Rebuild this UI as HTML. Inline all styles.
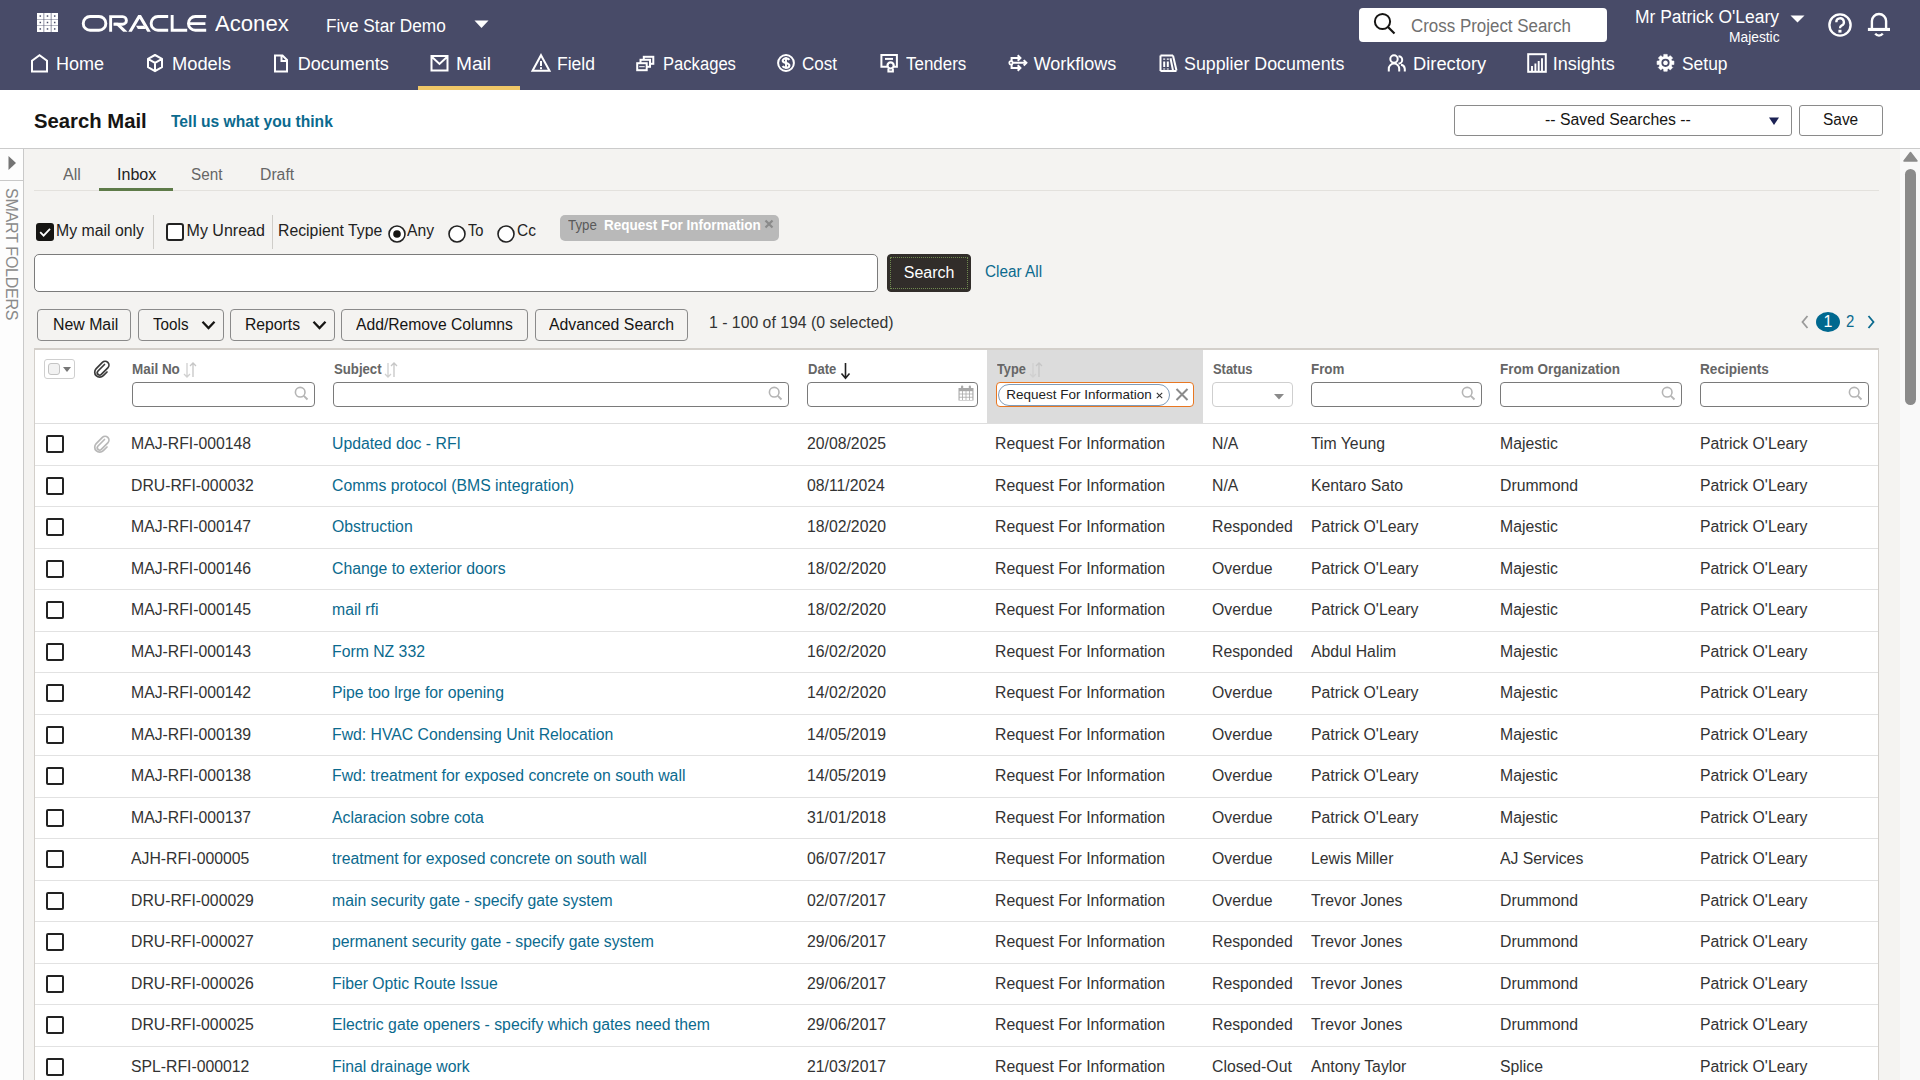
<!DOCTYPE html>
<html><head><meta charset="utf-8"><title>Search Mail</title>
<style>
html,body{margin:0;padding:0;width:1920px;height:1080px;overflow:hidden;background:#f4f3f1;}
body{position:relative;font-family:"Liberation Sans",sans-serif;}
.t{position:absolute;white-space:nowrap;transform-origin:0 0;}
svg{overflow:visible}
</style></head><body>
<div style="position:absolute;left:0px;top:0px;width:1920px;height:90px;background:#484b68"></div>
<svg style="position:absolute;left:37px;top:13px;" width="21" height="19" viewBox="0 0 21 19"><rect x="0.00" y="0.00" width="6.6" height="6.1" fill="#fff"/><rect x="2.55" y="2.30" width="1.5" height="1.5" fill="#484b68"/><rect x="7.20" y="0.00" width="6.6" height="6.1" fill="#fff"/><rect x="9.75" y="2.30" width="1.5" height="1.5" fill="#484b68"/><rect x="14.40" y="0.00" width="6.6" height="6.1" fill="#fff"/><rect x="16.95" y="2.30" width="1.5" height="1.5" fill="#484b68"/><rect x="0.00" y="6.45" width="6.6" height="6.1" fill="#fff"/><rect x="2.55" y="8.75" width="1.5" height="1.5" fill="#484b68"/><rect x="7.20" y="6.45" width="6.6" height="6.1" fill="#fff"/><rect x="9.75" y="8.75" width="1.5" height="1.5" fill="#484b68"/><rect x="14.40" y="6.45" width="6.6" height="6.1" fill="#fff"/><rect x="16.95" y="8.75" width="1.5" height="1.5" fill="#484b68"/><rect x="0.00" y="12.90" width="6.6" height="6.1" fill="#fff"/><rect x="2.55" y="15.20" width="1.5" height="1.5" fill="#484b68"/><rect x="7.20" y="12.90" width="6.6" height="6.1" fill="#fff"/><rect x="9.75" y="15.20" width="1.5" height="1.5" fill="#484b68"/><rect x="14.40" y="12.90" width="6.6" height="6.1" fill="#fff"/><rect x="16.95" y="15.20" width="1.5" height="1.5" fill="#484b68"/></svg>
<svg style="position:absolute;left:78px;top:12px;" width="132" height="22" viewBox="78 12 132 22"><g fill="none" stroke="#fff" stroke-width="2.9">
<path d="M90.1 16.55 H99 A6.85 6.85 0 0 1 99 30.25 H90.1 A6.85 6.85 0 0 1 90.1 16.55 Z"/>
<path d="M110.65 31.7 V16.6 H122.6 A3.8 3.8 0 0 1 122.6 24.2 H113.5"/>
<path d="M158 16.55 H168.2 M158 30.25 H168.2 M158 16.55 A6.85 6.85 0 0 0 158 30.25"/>
<path d="M172.15 15.1 V30.25 H187.2"/>
<path d="M195.3 16.55 H206.2 M195.3 30.25 H206.2 M195.3 16.55 A6.85 6.85 0 0 0 195.3 30.25 M189.5 23.65 H205.4"/>
</g>
<g fill="#fff">
<path d="M114 22.8 H118.2 L127.6 31.7 H123.2 Z"/>
<path d="M128.3 31.7 L138.2 15.1 H141 L150.8 31.7 H147.3 L139.6 18.8 L131.8 31.7 Z"/>
<path d="M136 25.8 H144 L146 29 H137.9 Z"/>
</g></svg>
<span id="t1" class="t" style="left:215.00px;top:12.88px;font-size:22px;line-height:22px;color:#ffffff;transform:scaleX(1.0050);">Aconex</span>
<span id="t2" class="t" style="left:325.60px;top:16.76px;font-size:18px;line-height:18px;color:#ffffff;transform:scaleX(0.9579);">Five Star Demo</span>
<svg style="position:absolute;left:474px;top:20px;" width="15" height="8" viewBox="0 0 15 8"><path d="M0.5 0.5 H14.5 L7.5 8 Z" fill="#fff"/></svg>
<div style="position:absolute;left:1359px;top:8px;width:248px;height:33.5px;background:#fff;border-radius:4px"></div>
<svg style="position:absolute;left:1373px;top:12px;" width="24" height="23" viewBox="0 0 24 23"><circle cx="9.5" cy="9.5" r="7.6" fill="none" stroke="#161513" stroke-width="2"/><path d="M15 15 L21.5 21.5" stroke="#161513" stroke-width="2.2"/></svg>
<span id="t3" class="t" style="left:1410.50px;top:16.76px;font-size:18px;line-height:18px;color:#6f6f6f;transform:scaleX(0.9400);">Cross Project Search</span>
<span id="t4" class="t" style="left:1635.00px;top:7.76px;font-size:18px;line-height:18px;color:#ffffff;transform:scaleX(0.9697);">Mr Patrick O'Leary</span>
<span id="t5" class="t" style="left:1729.00px;top:30.35px;font-size:14px;line-height:14px;color:#ffffff;transform:scaleX(0.9852);">Majestic</span>
<svg style="position:absolute;left:1790px;top:14.5px;" width="15" height="8" viewBox="0 0 15 8"><path d="M0.5 0.5 H14.5 L7.5 7.5 Z" fill="#fff"/></svg>
<svg style="position:absolute;left:1827px;top:12px;" width="26" height="26" viewBox="0 0 26 26"><circle cx="13" cy="13" r="10.6" fill="none" stroke="#fff" stroke-width="2.4"/><path d="M9.3 10.2 A3.8 3.8 0 1 1 14.5 13.6 C13.3 14.2 13 14.8 13 16.2" fill="none" stroke="#fff" stroke-width="2.3"/><rect x="11.4" y="17.8" width="3.1" height="2.8" fill="#fff"/></svg>
<svg style="position:absolute;left:1866px;top:12px;" width="26" height="26" viewBox="0 0 26 26"><path d="M5.9 16.5 V9.1 A7.1 7.1 0 0 1 20.1 9.1 V16.5" fill="none" stroke="#fff" stroke-width="2.4"/><rect x="1.9" y="15.9" width="22.1" height="3.1" fill="#fff"/><path d="M9.2 21.6 A4.7 4.7 0 0 0 16.8 21.6" fill="none" stroke="#fff" stroke-width="2.3"/></svg>
<span id="t6" class="t" style="left:56.00px;top:54.76px;font-size:18px;line-height:18px;color:#ffffff;">Home</span>
<span id="t7" class="t" style="left:171.60px;top:54.76px;font-size:18px;line-height:18px;color:#ffffff;transform:scaleX(1.0171);">Models</span>
<span id="t8" class="t" style="left:297.70px;top:54.76px;font-size:18px;line-height:18px;color:#ffffff;">Documents</span>
<span id="t9" class="t" style="left:455.60px;top:54.76px;font-size:18px;line-height:18px;color:#ffffff;transform:scaleX(1.0644);">Mail</span>
<span id="t10" class="t" style="left:557.30px;top:54.76px;font-size:18px;line-height:18px;color:#ffffff;transform:scaleX(0.9729);">Field</span>
<span id="t11" class="t" style="left:662.50px;top:54.76px;font-size:18px;line-height:18px;color:#ffffff;transform:scaleX(0.9225);">Packages</span>
<span id="t12" class="t" style="left:802.00px;top:54.76px;font-size:18px;line-height:18px;color:#ffffff;transform:scaleX(0.9457);">Cost</span>
<span id="t13" class="t" style="left:905.50px;top:54.76px;font-size:18px;line-height:18px;color:#ffffff;transform:scaleX(0.9416);">Tenders</span>
<span id="t14" class="t" style="left:1033.70px;top:54.76px;font-size:18px;line-height:18px;color:#ffffff;">Workflows</span>
<span id="t15" class="t" style="left:1184.40px;top:54.76px;font-size:18px;line-height:18px;color:#ffffff;transform:scaleX(0.9896);">Supplier Documents</span>
<span id="t16" class="t" style="left:1412.80px;top:54.76px;font-size:18px;line-height:18px;color:#ffffff;transform:scaleX(1.0168);">Directory</span>
<span id="t17" class="t" style="left:1552.80px;top:54.76px;font-size:18px;line-height:18px;color:#ffffff;">Insights</span>
<span id="t18" class="t" style="left:1681.70px;top:54.76px;font-size:18px;line-height:18px;color:#ffffff;transform:scaleX(0.9675);">Setup</span>
<div style="position:absolute;left:418px;top:86px;width:102px;height:4px;background:#f0c767"></div>
<svg style="position:absolute;left:30px;top:53px;" width="19" height="20" viewBox="0 0 19 20"><path d="M2 18.5 V7.8 L9.5 2.2 L17 7.8 V18.5 Z" fill="none" stroke="#fff" stroke-width="2" stroke-linejoin="miter"/></svg>
<svg style="position:absolute;left:146px;top:53px;" width="18" height="20" viewBox="0 0 18 20"><path d="M9 2 L16 5.8 V14.2 L9 18.2 L2 14.2 V5.8 Z M2 5.8 L9 9.8 L16 5.8 M9 9.8 V18.2" fill="none" stroke="#fff" stroke-width="2" stroke-linejoin="round"/></svg>
<svg style="position:absolute;left:273px;top:53px;" width="16" height="20" viewBox="0 0 16 20"><path d="M2 2.5 H9.5 L14 7 V18.5 H2 Z M8.5 2.5 V8 H14" fill="none" stroke="#fff" stroke-width="2"/></svg>
<svg style="position:absolute;left:430px;top:54px;" width="19" height="18" viewBox="0 0 19 18"><path d="M1.5 2 H17.5 V16.5 H1.5 Z M1.5 2.5 L9.5 10 L17.5 2.5" fill="none" stroke="#fff" stroke-width="2"/></svg>
<svg style="position:absolute;left:531px;top:53px;" width="20" height="20" viewBox="0 0 20 20"><path d="M10 2.2 L18.5 17.8 H1.5 Z" fill="none" stroke="#fff" stroke-width="2" stroke-linejoin="miter"/><path d="M10 8 V13" stroke="#fff" stroke-width="2"/><rect x="9" y="14.2" width="2" height="2" fill="#fff"/></svg>
<svg style="position:absolute;left:636px;top:55px;" width="19" height="17" viewBox="0 0 19 17"><rect x="7.8" y="1.8" width="9.5" height="7" fill="none" stroke="#fff" stroke-width="2"/><rect x="4.5" y="4.8" width="9.5" height="7" fill="#484b68" stroke="#fff" stroke-width="2"/><rect x="1.2" y="8.2" width="9.5" height="7" fill="#484b68" stroke="#fff" stroke-width="2"/><path d="M3.2 11.7 H8.7" stroke="#fff" stroke-width="1"/></svg>
<svg style="position:absolute;left:776px;top:53px;" width="20" height="20" viewBox="0 0 20 20"><circle cx="10" cy="10" r="7.9" fill="none" stroke="#fff" stroke-width="2"/><path d="M13.4 6.9 C12.8 6 11.7 5.4 10 5.4 C8.1 5.4 6.7 6.3 6.7 7.8 C6.7 10.6 13.4 9.5 13.4 12.4 C13.4 13.9 12 14.7 10 14.7 C8.4 14.7 7.2 14.1 6.5 13.1" fill="none" stroke="#fff" stroke-width="2.1"/><path d="M10 4.3 V15.7" stroke="#fff" stroke-width="1.9"/></svg>
<svg style="position:absolute;left:879px;top:53px;" width="20" height="20" viewBox="0 0 20 20"><path d="M8.2 13.7 H2.4 V2.1 H17.9 V13.7 H15" fill="none" stroke="#fff" stroke-width="2"/><path d="M6 5.9 H14" stroke="#fff" stroke-width="2"/><circle cx="11.6" cy="12.4" r="3.1" fill="none" stroke="#fff" stroke-width="2.2"/><path d="M9.4 15.6 V18.4 H13.9 V15.6" fill="none" stroke="#fff" stroke-width="2"/></svg>
<svg style="position:absolute;left:1008px;top:53px;" width="20" height="20" viewBox="0 0 20 20"><path d="M3.6 5 H11.6 M3.6 15 H11.6 M3.6 4 V16 M4.6 9.8 H17.6" fill="none" stroke="#fff" stroke-width="2"/><path d="M9.7 2.3 L12.4 5 L9.7 7.7 M9.7 12.3 L12.4 15 L9.7 17.7 M15.7 7.1 L18.4 9.8 L15.7 12.5" fill="none" stroke="#fff" stroke-width="2"/><circle cx="3" cy="9.8" r="1.7" fill="#484b68" stroke="#fff" stroke-width="1.7"/></svg>
<svg style="position:absolute;left:1159px;top:53px;" width="19" height="20" viewBox="0 0 19 20"><path d="M1.5 2.5 H14 M1.5 18 H17.5 M1.5 2.5 V18 M5.2 5.5 V6.8 M8.8 5.5 V6.8 M5.2 8.5 V14 M8.8 8.5 V14 M5.2 15.5 V16.5 M8.8 15.5 V16.5 M11.5 5.2 L14 17.5 M14 2.5 L17.5 17.5" fill="none" stroke="#fff" stroke-width="2"/></svg>
<svg style="position:absolute;left:1387px;top:53px;" width="20" height="20" viewBox="0 0 20 20"><circle cx="7" cy="6" r="3.7" fill="none" stroke="#fff" stroke-width="2"/><path d="M11.5 3.2 A3.7 3.7 0 1 1 11.5 10.6" fill="none" stroke="#fff" stroke-width="2"/><path d="M1.8 18.5 V15.8 A5.2 5.2 0 0 1 12.2 15.8 V18.5 M14 11.8 A4.5 4.5 0 0 1 17.8 15.8 V18.5" fill="none" stroke="#fff" stroke-width="2"/></svg>
<svg style="position:absolute;left:1527px;top:53px;" width="20" height="20" viewBox="0 0 20 20"><rect x="1.2" y="1.2" width="17.6" height="17.6" fill="none" stroke="#fff" stroke-width="2"/><path d="M5 18 V13 M8.4 18 V10.5 M11.7 18 V8 M15 18 V5.2" stroke="#fff" stroke-width="1.9"/></svg>
<svg style="position:absolute;left:1656px;top:53px;" width="20" height="20" viewBox="0 0 20 20"><g transform="translate(9.5,9.8)"><path d="M-1.76 -6.36 L-1.75 -8.42 L1.75 -8.42 L1.76 -6.36 L3.25 -5.74 L4.72 -7.19 L7.19 -4.72 L5.74 -3.25 L6.36 -1.76 L8.42 -1.75 L8.42 1.75 L6.36 1.76 L5.74 3.25 L7.19 4.72 L4.72 7.19 L3.25 5.74 L1.76 6.36 L1.75 8.42 L-1.75 8.42 L-1.76 6.36 L-3.25 5.74 L-4.72 7.19 L-7.19 4.72 L-5.74 3.25 L-6.36 1.76 L-8.42 1.75 L-8.42 -1.75 L-6.36 -1.76 L-5.74 -3.25 L-7.19 -4.72 L-4.72 -7.19 L-3.25 -5.74 Z" fill="#fff" stroke="#fff" stroke-width="0.6" stroke-linejoin="round"/><circle r="3.2" fill="#fff" stroke="#484b68" stroke-width="1.8"/></g></svg>
<div style="position:absolute;left:0px;top:90px;width:1920px;height:58px;background:#fff"></div>
<div style="position:absolute;left:0px;top:148px;width:1920px;height:1px;background:#cbcbcb"></div>
<span id="t19" class="t" style="left:33.70px;top:110.67px;font-size:20px;line-height:20px;color:#161513;font-weight:700;transform:scaleX(1.0135);">Search Mail</span>
<span id="t20" class="t" style="left:171.30px;top:114.46px;font-size:16px;line-height:16px;color:#0b6a8e;font-weight:700;transform:scaleX(0.9751);">Tell us what you think</span>
<div style="position:absolute;left:1454px;top:105px;width:336px;height:29px;background:#fff;border:1px solid #8a8a8a;border-radius:3px"></div>
<span id="t21" class="t" style="left:1545.00px;top:112.26px;font-size:16px;line-height:16px;color:#161513;transform:scaleX(0.9879);">-- Saved Searches --</span>
<svg style="position:absolute;left:1769px;top:117px;" width="10" height="8" viewBox="0 0 10 8"><path d="M0 0.5 H10 L5 8 Z" fill="#1c2255"/></svg>
<div style="position:absolute;left:1799px;top:105px;width:82px;height:29px;background:#fff;border:1px solid #8a8a8a;border-radius:3px"></div>
<span id="t22" class="t" style="left:1823.00px;top:112.26px;font-size:16px;line-height:16px;color:#161513;transform:scaleX(0.9653);">Save</span>
<div style="position:absolute;left:0px;top:149px;width:23px;height:931px;background:#fdfdfd"></div>
<div style="position:absolute;left:23px;top:149px;width:1px;height:931px;background:#c9c9c9"></div>
<div style="position:absolute;left:0px;top:180px;width:23px;height:1px;background:#c9c9c9"></div>
<svg style="position:absolute;left:8px;top:156px;" width="9" height="14" viewBox="0 0 9 14"><path d="M0.5 0 L8 7 L0.5 14 Z" fill="#747474"/></svg>
<span class="t" style="left:3px;top:188px;font-size:16px;line-height:16px;color:#8a8a8a;writing-mode:vertical-rl;letter-spacing:-0.25px">SMART FOLDERS</span>
<div style="position:absolute;left:24px;top:149px;width:1876px;height:931px;background:#f4f3f1"></div>
<div style="position:absolute;left:1900px;top:149px;width:20px;height:931px;background:#f9f9f9"></div>
<svg style="position:absolute;left:1903px;top:151px;" width="15" height="11" viewBox="0 0 15 11"><path d="M1 10 L7.5 1.5 L14 10 Z" fill="#8b8b8b" stroke="#8b8b8b" stroke-linejoin="round" stroke-width="1.5"/></svg>
<div style="position:absolute;left:1905px;top:168.5px;width:11px;height:236px;background:#8b8b8b;border-radius:6px"></div>
<div style="position:absolute;left:34px;top:190px;width:1845px;height:1px;background:#e3e1dd"></div>
<span id="t23" class="t" style="left:62.90px;top:166.76px;font-size:16px;line-height:16px;color:#666;transform:scaleX(1.0043);">All</span>
<span id="t24" class="t" style="left:116.70px;top:166.76px;font-size:16px;line-height:16px;color:#222;transform:scaleX(1.0042);">Inbox</span>
<span id="t25" class="t" style="left:191.40px;top:166.76px;font-size:16px;line-height:16px;color:#666;transform:scaleX(0.9531);">Sent</span>
<span id="t26" class="t" style="left:259.80px;top:166.76px;font-size:16px;line-height:16px;color:#666;transform:scaleX(0.9846);">Draft</span>
<div style="position:absolute;left:99px;top:188px;width:74px;height:3px;background:#5e7b49"></div>
<div style="position:absolute;left:36px;top:223px;width:18px;height:18px;background:#161513;border-radius:3px"></div>
<svg style="position:absolute;left:36px;top:223px;" width="18" height="18" viewBox="0 0 18 18"><path d="M4.2 9.2 L7.6 12.6 L14 5.8" fill="none" stroke="#fff" stroke-width="1.8"/></svg>
<span id="t27" class="t" style="left:56.40px;top:223.06px;font-size:16px;line-height:16px;color:#222;transform:scaleX(0.9897);">My mail only</span>
<div style="position:absolute;left:153px;top:215px;width:1px;height:34px;background:#cfcdc9"></div>
<div style="position:absolute;left:166px;top:223px;width:18px;height:18px;box-sizing:border-box;border:2px solid #222;border-radius:3px;background:#fff"></div>
<span id="t28" class="t" style="left:186.60px;top:223.06px;font-size:16px;line-height:16px;color:#222;">My Unread</span>
<div style="position:absolute;left:272px;top:215px;width:1px;height:34px;background:#cfcdc9"></div>
<span id="t29" class="t" style="left:278.00px;top:223.06px;font-size:16px;line-height:16px;color:#222;transform:scaleX(0.9873);">Recipient Type</span>
<svg style="position:absolute;left:387px;top:224px;" width="20" height="20" viewBox="0 0 20 20"><circle cx="10" cy="10" r="8" fill="#fff" stroke="#222" stroke-width="1.6"/><circle cx="10" cy="10" r="3.8" fill="#161513"/></svg>
<span id="t30" class="t" style="left:407.00px;top:223.06px;font-size:16px;line-height:16px;color:#222;transform:scaleX(0.9793);">Any</span>
<svg style="position:absolute;left:447px;top:224px;" width="20" height="20" viewBox="0 0 20 20"><circle cx="10" cy="10" r="8" fill="#fff" stroke="#222" stroke-width="1.6"/></svg>
<span id="t31" class="t" style="left:467.60px;top:223.06px;font-size:16px;line-height:16px;color:#222;transform:scaleX(0.9176);">To</span>
<svg style="position:absolute;left:496px;top:224px;" width="20" height="20" viewBox="0 0 20 20"><circle cx="10" cy="10" r="8" fill="#fff" stroke="#222" stroke-width="1.6"/></svg>
<span id="t32" class="t" style="left:516.50px;top:223.06px;font-size:16px;line-height:16px;color:#222;transform:scaleX(0.9665);">Cc</span>
<div style="position:absolute;left:560px;top:215px;width:219px;height:26px;background:#b9b9b9;border-radius:5px"></div>
<span id="t33" class="t" style="left:568.00px;top:217.50px;font-size:14px;line-height:14px;color:#5a5a5a;transform:scaleX(0.9488);">Type</span>
<span id="t34" class="t" style="left:603.75px;top:217.50px;font-size:14px;line-height:14px;color:#fff;font-weight:700;transform:scaleX(0.9645);">Request For Information</span>
<svg style="position:absolute;left:764px;top:219px;" width="10" height="10" viewBox="0 0 10 10"><path d="M1.5 1.5 L8.5 8.5 M8.5 1.5 L1.5 8.5" stroke="#8a8a8a" stroke-width="2.2"/></svg>
<div style="position:absolute;left:34px;top:254px;width:844px;height:38px;box-sizing:border-box;background:#fff;border:1px solid #7b7b7b;border-radius:5px"></div>
<div style="position:absolute;left:887px;top:254px;width:84px;height:38px;background:#312d2a;border-radius:4px;box-sizing:border-box;border:1px solid #312d2a"></div>
<div style="position:absolute;left:890px;top:257px;width:78px;height:32px;box-sizing:border-box;border:1px dotted #6f8a4f"></div>
<span id="t35" class="t" style="left:903.80px;top:264.56px;font-size:16px;line-height:16px;color:#fff;">Search</span>
<span id="t36" class="t" style="left:984.60px;top:264.06px;font-size:16px;line-height:16px;color:#0b6a8e;transform:scaleX(0.9582);">Clear All</span>
<div style="position:absolute;left:37px;top:309px;width:94px;height:32px;box-sizing:border-box;background:#f4f3f1;border:1px solid #8a8a8a;border-radius:4px"></div>
<span id="t37" class="t" style="left:52.70px;top:317.06px;font-size:16px;line-height:16px;color:#161513;transform:scaleX(0.9917);">New Mail</span>
<div style="position:absolute;left:138px;top:309px;width:86px;height:32px;box-sizing:border-box;background:#f4f3f1;border:1px solid #8a8a8a;border-radius:4px"></div>
<span id="t38" class="t" style="left:153.00px;top:317.06px;font-size:16px;line-height:16px;color:#161513;transform:scaleX(0.9504);">Tools</span>
<svg style="position:absolute;left:200.5px;top:320px;" width="15" height="10" viewBox="0 0 15 10"><path d="M1.5 1.8 L7.5 8 L13.5 1.8" fill="none" stroke="#161513" stroke-width="2.3"/></svg>
<div style="position:absolute;left:230px;top:309px;width:105px;height:32px;box-sizing:border-box;background:#f4f3f1;border:1px solid #8a8a8a;border-radius:4px"></div>
<span id="t39" class="t" style="left:245.20px;top:317.06px;font-size:16px;line-height:16px;color:#161513;transform:scaleX(0.9814);">Reports</span>
<svg style="position:absolute;left:311.5px;top:320px;" width="15" height="10" viewBox="0 0 15 10"><path d="M1.5 1.8 L7.5 8 L13.5 1.8" fill="none" stroke="#161513" stroke-width="2.3"/></svg>
<div style="position:absolute;left:341px;top:309px;width:187px;height:32px;box-sizing:border-box;background:#f4f3f1;border:1px solid #8a8a8a;border-radius:4px"></div>
<span id="t40" class="t" style="left:356.20px;top:317.06px;font-size:16px;line-height:16px;color:#161513;transform:scaleX(0.9796);">Add/Remove Columns</span>
<div style="position:absolute;left:535px;top:309px;width:153px;height:32px;box-sizing:border-box;background:#f4f3f1;border:1px solid #8a8a8a;border-radius:4px"></div>
<span id="t41" class="t" style="left:549.20px;top:317.06px;font-size:16px;line-height:16px;color:#161513;transform:scaleX(0.9896);">Advanced Search</span>
<span id="t42" class="t" style="left:709.00px;top:314.56px;font-size:16px;line-height:16px;color:#333;transform:scaleX(0.9879);">1 - 100 of 194 (0 selected)</span>
<svg style="position:absolute;left:1800px;top:315px;" width="10" height="14" viewBox="0 0 10 14"><path d="M7.5 1 L2.5 7 L7.5 13" fill="none" stroke="#9a9a9a" stroke-width="1.8"/></svg>
<svg style="position:absolute;left:1816px;top:312px;" width="24" height="20" viewBox="0 0 24 20"><ellipse cx="12" cy="10" rx="12" ry="10" fill="#00688f"/></svg>
<span id="t43" class="t" style="left:1823.50px;top:314.06px;font-size:16px;line-height:16px;color:#fff;">1</span>
<span id="t44" class="t" style="left:1846.00px;top:314.06px;font-size:16px;line-height:16px;color:#0b6a8e;transform:scaleX(0.9333);">2</span>
<svg style="position:absolute;left:1866px;top:315px;" width="10" height="14" viewBox="0 0 10 14"><path d="M2.5 1 L7.5 7 L2.5 13" fill="none" stroke="#0b6a8e" stroke-width="1.8"/></svg>
<div style="position:absolute;left:34px;top:348px;width:1845px;height:732px;box-sizing:border-box;background:#fff;border:1px solid #d3cfca;border-top:2px solid #d3cfca;border-bottom:none"></div>
<div style="position:absolute;left:987px;top:350px;width:216px;height:73.5px;background:#dcdcdc"></div>
<div style="position:absolute;left:35px;top:423px;width:1843px;height:1px;background:#dedede"></div>
<div style="position:absolute;left:44px;top:359px;width:31px;height:20px;box-sizing:border-box;border:1px solid #cfcfcf;border-radius:3px;background:#fff"></div>
<div style="position:absolute;left:47.5px;top:362.5px;width:12.5px;height:12.5px;box-sizing:border-box;border:1.5px solid #c4c4c4;border-radius:3px;background:#f2f2f2"></div>
<svg style="position:absolute;left:63px;top:367px;" width="8" height="5" viewBox="0 0 8 5"><path d="M0 0 H8 L4 5 Z" fill="#777"/></svg>
<svg style="position:absolute;left:93px;top:359px;" width="17" height="18" viewBox="0 0 17 18"><path d="M11.5 5.5 L5 12 A2.3 2.3 0 0 0 8.3 15.3 L14.8 8.8 A3.8 3.8 0 0 0 9.4 3.4 L3.2 9.6 A5 5 0 0 0 10.3 16.7 L14 13" fill="none" stroke="#3a3a3a" stroke-width="1.7" stroke-linecap="round"/></svg>
<span id="t45" class="t" style="left:131.90px;top:362.15px;font-size:14px;line-height:14px;color:#666;font-weight:700;transform:scaleX(0.9608);">Mail No</span>
<svg style="position:absolute;left:182.5px;top:362px;" width="14" height="16" viewBox="0 0 14 16"><path d="M4 1 V15 M1 12 L4 15 L7 12" fill="none" stroke="#d0d0d0" stroke-width="1.3"/><path d="M10 15 V1 M7 4 L10 1 L13 4" fill="none" stroke="#c6c6c6" stroke-width="1.3"/></svg>
<span id="t46" class="t" style="left:334.00px;top:362.15px;font-size:14px;line-height:14px;color:#666;font-weight:700;transform:scaleX(0.9410);">Subject</span>
<svg style="position:absolute;left:383.5px;top:362px;" width="14" height="16" viewBox="0 0 14 16"><path d="M4 1 V15 M1 12 L4 15 L7 12" fill="none" stroke="#d0d0d0" stroke-width="1.3"/><path d="M10 15 V1 M7 4 L10 1 L13 4" fill="none" stroke="#c6c6c6" stroke-width="1.3"/></svg>
<span id="t47" class="t" style="left:807.75px;top:362.15px;font-size:14px;line-height:14px;color:#666;font-weight:700;transform:scaleX(0.9326);">Date</span>
<svg style="position:absolute;left:840px;top:362px;" width="11" height="18" viewBox="0 0 11 18"><path d="M5.5 1 V16 M1.5 11.5 L5.5 16.2 L9.5 11.5" fill="none" stroke="#222" stroke-width="1.6"/></svg>
<span id="t48" class="t" style="left:996.70px;top:362.15px;font-size:14px;line-height:14px;color:#666;font-weight:700;transform:scaleX(0.9105);">Type</span>
<svg style="position:absolute;left:1028.5px;top:362px;" width="14" height="16" viewBox="0 0 14 16"><path d="M4 1 V15 M1 12 L4 15 L7 12" fill="none" stroke="#d0d0d0" stroke-width="1.3"/><path d="M10 15 V1 M7 4 L10 1 L13 4" fill="none" stroke="#c6c6c6" stroke-width="1.3"/></svg>
<span id="t49" class="t" style="left:1213.30px;top:362.15px;font-size:14px;line-height:14px;color:#666;font-weight:700;transform:scaleX(0.9233);">Status</span>
<span id="t50" class="t" style="left:1310.80px;top:362.15px;font-size:14px;line-height:14px;color:#666;font-weight:700;transform:scaleX(0.9551);">From</span>
<span id="t51" class="t" style="left:1500.20px;top:362.15px;font-size:14px;line-height:14px;color:#666;font-weight:700;transform:scaleX(0.9645);">From Organization</span>
<span id="t52" class="t" style="left:1700.40px;top:362.15px;font-size:14px;line-height:14px;color:#666;font-weight:700;transform:scaleX(0.9716);">Recipients</span>
<div style="position:absolute;left:132px;top:382px;width:183px;height:25px;box-sizing:border-box;background:#fff;border:1px solid #7a7a7a;border-radius:4px"></div>
<svg style="position:absolute;left:294px;top:386px;" width="15" height="15" viewBox="0 0 15 15"><circle cx="6.2" cy="6.2" r="4.8" fill="none" stroke="#b5b5b5" stroke-width="1.6"/><path d="M9.8 9.8 L13.5 13.5" stroke="#b5b5b5" stroke-width="1.9"/></svg>
<div style="position:absolute;left:333px;top:382px;width:456px;height:25px;box-sizing:border-box;background:#fff;border:1px solid #7a7a7a;border-radius:4px"></div>
<svg style="position:absolute;left:768px;top:386px;" width="15" height="15" viewBox="0 0 15 15"><circle cx="6.2" cy="6.2" r="4.8" fill="none" stroke="#b5b5b5" stroke-width="1.6"/><path d="M9.8 9.8 L13.5 13.5" stroke="#b5b5b5" stroke-width="1.9"/></svg>
<div style="position:absolute;left:807px;top:382px;width:171px;height:25px;box-sizing:border-box;background:#fff;border:1px solid #7a7a7a;border-radius:4px"></div>
<svg style="position:absolute;left:958px;top:385px;" width="16" height="16" viewBox="0 0 16 16"><rect x="0.5" y="3" width="15" height="12.5" fill="#a9a9a9"/><rect x="3" y="0.5" width="2.2" height="4" rx="1" fill="#a9a9a9"/><rect x="10.8" y="0.5" width="2.2" height="4" rx="1" fill="#a9a9a9"/><rect x="1.6" y="6.2" width="2.6" height="2.4" fill="#fff"/><rect x="1.6" y="9.4" width="2.6" height="2.4" fill="#fff"/><rect x="1.6" y="12.600000000000001" width="2.6" height="2.4" fill="#fff"/><rect x="5.0" y="6.2" width="2.6" height="2.4" fill="#fff"/><rect x="5.0" y="9.4" width="2.6" height="2.4" fill="#fff"/><rect x="5.0" y="12.600000000000001" width="2.6" height="2.4" fill="#fff"/><rect x="8.4" y="6.2" width="2.6" height="2.4" fill="#fff"/><rect x="8.4" y="9.4" width="2.6" height="2.4" fill="#fff"/><rect x="8.4" y="12.600000000000001" width="2.6" height="2.4" fill="#fff"/><rect x="11.799999999999999" y="6.2" width="2.6" height="2.4" fill="#fff"/><rect x="11.799999999999999" y="9.4" width="2.6" height="2.4" fill="#fff"/><rect x="11.799999999999999" y="12.600000000000001" width="2.6" height="2.4" fill="#fff"/></svg>
<div style="position:absolute;left:996px;top:382px;width:198px;height:25px;box-sizing:border-box;background:#fff;border:1px solid #e87722;border-radius:4px"></div>
<div style="position:absolute;left:998px;top:384px;width:172px;height:22px;box-sizing:border-box;border:1px solid #7f9bb8;border-radius:11px"></div>
<span id="t53" class="t" style="left:1006.30px;top:387.77px;font-size:13.5px;line-height:13.5px;color:#222;">Request For Information</span>
<svg style="position:absolute;left:1155.5px;top:392px;" width="7" height="7" viewBox="0 0 7 7"><path d="M0.8 0.8 L6.2 6.2 M6.2 0.8 L0.8 6.2" stroke="#333" stroke-width="1.1"/></svg>
<svg style="position:absolute;left:1175px;top:388px;" width="14" height="13" viewBox="0 0 14 13"><path d="M1.5 1 L12.5 12 M12.5 1 L1.5 12" stroke="#8a8a8a" stroke-width="2"/></svg>
<div style="position:absolute;left:1212px;top:382px;width:81px;height:25px;box-sizing:border-box;background:#fff;border:1px solid #cfcfcf;border-radius:4px"></div>
<svg style="position:absolute;left:1274px;top:394px;" width="10" height="6" viewBox="0 0 10 6"><path d="M0 0 H10 L5 5.5 Z" fill="#8a8a8a"/></svg>
<div style="position:absolute;left:1311px;top:382px;width:171px;height:25px;box-sizing:border-box;background:#fff;border:1px solid #7a7a7a;border-radius:4px"></div>
<svg style="position:absolute;left:1461px;top:386px;" width="15" height="15" viewBox="0 0 15 15"><circle cx="6.2" cy="6.2" r="4.8" fill="none" stroke="#b5b5b5" stroke-width="1.6"/><path d="M9.8 9.8 L13.5 13.5" stroke="#b5b5b5" stroke-width="1.9"/></svg>
<div style="position:absolute;left:1500px;top:382px;width:182px;height:25px;box-sizing:border-box;background:#fff;border:1px solid #7a7a7a;border-radius:4px"></div>
<svg style="position:absolute;left:1661px;top:386px;" width="15" height="15" viewBox="0 0 15 15"><circle cx="6.2" cy="6.2" r="4.8" fill="none" stroke="#b5b5b5" stroke-width="1.6"/><path d="M9.8 9.8 L13.5 13.5" stroke="#b5b5b5" stroke-width="1.9"/></svg>
<div style="position:absolute;left:1700px;top:382px;width:169px;height:25px;box-sizing:border-box;background:#fff;border:1px solid #7a7a7a;border-radius:4px"></div>
<svg style="position:absolute;left:1848px;top:386px;" width="15" height="15" viewBox="0 0 15 15"><circle cx="6.2" cy="6.2" r="4.8" fill="none" stroke="#b5b5b5" stroke-width="1.6"/><path d="M9.8 9.8 L13.5 13.5" stroke="#b5b5b5" stroke-width="1.9"/></svg>
<div style="position:absolute;left:35px;top:464.5px;width:1843px;height:1px;background:#e2e2e2"></div>
<div style="position:absolute;left:46px;top:435.0px;width:18px;height:18px;box-sizing:border-box;border:2px solid #222;border-radius:2px;background:#fff"></div>
<svg style="position:absolute;left:93px;top:434.0px;" width="17" height="18" viewBox="0 0 17 18"><path d="M11.5 5.5 L5 12 A2.3 2.3 0 0 0 8.3 15.3 L14.8 8.8 A3.8 3.8 0 0 0 9.4 3.4 L3.2 9.6 A5 5 0 0 0 10.3 16.7 L14 13" fill="none" stroke="#b8b8b8" stroke-width="1.7" stroke-linecap="round"/></svg>
<span id="t54" class="t" style="left:131.10px;top:436.21px;font-size:16px;line-height:16px;color:#333;transform:scaleX(0.986);">MAJ-RFI-000148</span>
<span id="t55" class="t" style="left:332.30px;top:436.21px;font-size:16px;line-height:16px;color:#0b6a8e;transform:scaleX(0.986);">Updated doc - RFI</span>
<span id="t56" class="t" style="left:807.10px;top:436.21px;font-size:16px;line-height:16px;color:#333;transform:scaleX(0.986);">20/08/2025</span>
<span id="t57" class="t" style="left:995.20px;top:436.21px;font-size:16px;line-height:16px;color:#333;transform:scaleX(0.986);">Request For Information</span>
<span id="t58" class="t" style="left:1212.40px;top:436.21px;font-size:16px;line-height:16px;color:#333;transform:scaleX(0.986);">N/A</span>
<span id="t59" class="t" style="left:1310.60px;top:436.21px;font-size:16px;line-height:16px;color:#333;transform:scaleX(0.986);">Tim Yeung</span>
<span id="t60" class="t" style="left:1499.60px;top:436.21px;font-size:16px;line-height:16px;color:#333;transform:scaleX(0.986);">Majestic</span>
<span id="t61" class="t" style="left:1699.80px;top:436.21px;font-size:16px;line-height:16px;color:#333;transform:scaleX(0.986);">Patrick O'Leary</span>
<div style="position:absolute;left:35px;top:506.0px;width:1843px;height:1px;background:#e2e2e2"></div>
<div style="position:absolute;left:46px;top:476.5px;width:18px;height:18px;box-sizing:border-box;border:2px solid #222;border-radius:2px;background:#fff"></div>
<span id="t62" class="t" style="left:131.10px;top:477.71px;font-size:16px;line-height:16px;color:#333;transform:scaleX(0.986);">DRU-RFI-000032</span>
<span id="t63" class="t" style="left:332.30px;top:477.71px;font-size:16px;line-height:16px;color:#0b6a8e;transform:scaleX(0.986);">Comms protocol (BMS integration)</span>
<span id="t64" class="t" style="left:807.10px;top:477.71px;font-size:16px;line-height:16px;color:#333;transform:scaleX(0.986);">08/11/2024</span>
<span id="t65" class="t" style="left:995.20px;top:477.71px;font-size:16px;line-height:16px;color:#333;transform:scaleX(0.986);">Request For Information</span>
<span id="t66" class="t" style="left:1212.40px;top:477.71px;font-size:16px;line-height:16px;color:#333;transform:scaleX(0.986);">N/A</span>
<span id="t67" class="t" style="left:1310.60px;top:477.71px;font-size:16px;line-height:16px;color:#333;transform:scaleX(0.986);">Kentaro Sato</span>
<span id="t68" class="t" style="left:1499.60px;top:477.71px;font-size:16px;line-height:16px;color:#333;transform:scaleX(0.986);">Drummond</span>
<span id="t69" class="t" style="left:1699.80px;top:477.71px;font-size:16px;line-height:16px;color:#333;transform:scaleX(0.986);">Patrick O'Leary</span>
<div style="position:absolute;left:35px;top:547.5px;width:1843px;height:1px;background:#e2e2e2"></div>
<div style="position:absolute;left:46px;top:518.0px;width:18px;height:18px;box-sizing:border-box;border:2px solid #222;border-radius:2px;background:#fff"></div>
<span id="t70" class="t" style="left:131.10px;top:519.21px;font-size:16px;line-height:16px;color:#333;transform:scaleX(0.986);">MAJ-RFI-000147</span>
<span id="t71" class="t" style="left:332.30px;top:519.21px;font-size:16px;line-height:16px;color:#0b6a8e;transform:scaleX(0.986);">Obstruction</span>
<span id="t72" class="t" style="left:807.10px;top:519.21px;font-size:16px;line-height:16px;color:#333;transform:scaleX(0.986);">18/02/2020</span>
<span id="t73" class="t" style="left:995.20px;top:519.21px;font-size:16px;line-height:16px;color:#333;transform:scaleX(0.986);">Request For Information</span>
<span id="t74" class="t" style="left:1212.40px;top:519.21px;font-size:16px;line-height:16px;color:#333;transform:scaleX(0.986);">Responded</span>
<span id="t75" class="t" style="left:1310.60px;top:519.21px;font-size:16px;line-height:16px;color:#333;transform:scaleX(0.986);">Patrick O'Leary</span>
<span id="t76" class="t" style="left:1499.60px;top:519.21px;font-size:16px;line-height:16px;color:#333;transform:scaleX(0.986);">Majestic</span>
<span id="t77" class="t" style="left:1699.80px;top:519.21px;font-size:16px;line-height:16px;color:#333;transform:scaleX(0.986);">Patrick O'Leary</span>
<div style="position:absolute;left:35px;top:589.0px;width:1843px;height:1px;background:#e2e2e2"></div>
<div style="position:absolute;left:46px;top:559.5px;width:18px;height:18px;box-sizing:border-box;border:2px solid #222;border-radius:2px;background:#fff"></div>
<span id="t78" class="t" style="left:131.10px;top:560.71px;font-size:16px;line-height:16px;color:#333;transform:scaleX(0.986);">MAJ-RFI-000146</span>
<span id="t79" class="t" style="left:332.30px;top:560.71px;font-size:16px;line-height:16px;color:#0b6a8e;transform:scaleX(0.986);">Change to exterior doors</span>
<span id="t80" class="t" style="left:807.10px;top:560.71px;font-size:16px;line-height:16px;color:#333;transform:scaleX(0.986);">18/02/2020</span>
<span id="t81" class="t" style="left:995.20px;top:560.71px;font-size:16px;line-height:16px;color:#333;transform:scaleX(0.986);">Request For Information</span>
<span id="t82" class="t" style="left:1212.40px;top:560.71px;font-size:16px;line-height:16px;color:#333;transform:scaleX(0.986);">Overdue</span>
<span id="t83" class="t" style="left:1310.60px;top:560.71px;font-size:16px;line-height:16px;color:#333;transform:scaleX(0.986);">Patrick O'Leary</span>
<span id="t84" class="t" style="left:1499.60px;top:560.71px;font-size:16px;line-height:16px;color:#333;transform:scaleX(0.986);">Majestic</span>
<span id="t85" class="t" style="left:1699.80px;top:560.71px;font-size:16px;line-height:16px;color:#333;transform:scaleX(0.986);">Patrick O'Leary</span>
<div style="position:absolute;left:35px;top:630.5px;width:1843px;height:1px;background:#e2e2e2"></div>
<div style="position:absolute;left:46px;top:601.0px;width:18px;height:18px;box-sizing:border-box;border:2px solid #222;border-radius:2px;background:#fff"></div>
<span id="t86" class="t" style="left:131.10px;top:602.21px;font-size:16px;line-height:16px;color:#333;transform:scaleX(0.986);">MAJ-RFI-000145</span>
<span id="t87" class="t" style="left:332.30px;top:602.21px;font-size:16px;line-height:16px;color:#0b6a8e;transform:scaleX(0.986);">mail rfi</span>
<span id="t88" class="t" style="left:807.10px;top:602.21px;font-size:16px;line-height:16px;color:#333;transform:scaleX(0.986);">18/02/2020</span>
<span id="t89" class="t" style="left:995.20px;top:602.21px;font-size:16px;line-height:16px;color:#333;transform:scaleX(0.986);">Request For Information</span>
<span id="t90" class="t" style="left:1212.40px;top:602.21px;font-size:16px;line-height:16px;color:#333;transform:scaleX(0.986);">Overdue</span>
<span id="t91" class="t" style="left:1310.60px;top:602.21px;font-size:16px;line-height:16px;color:#333;transform:scaleX(0.986);">Patrick O'Leary</span>
<span id="t92" class="t" style="left:1499.60px;top:602.21px;font-size:16px;line-height:16px;color:#333;transform:scaleX(0.986);">Majestic</span>
<span id="t93" class="t" style="left:1699.80px;top:602.21px;font-size:16px;line-height:16px;color:#333;transform:scaleX(0.986);">Patrick O'Leary</span>
<div style="position:absolute;left:35px;top:672.0px;width:1843px;height:1px;background:#e2e2e2"></div>
<div style="position:absolute;left:46px;top:642.5px;width:18px;height:18px;box-sizing:border-box;border:2px solid #222;border-radius:2px;background:#fff"></div>
<span id="t94" class="t" style="left:131.10px;top:643.71px;font-size:16px;line-height:16px;color:#333;transform:scaleX(0.986);">MAJ-RFI-000143</span>
<span id="t95" class="t" style="left:332.30px;top:643.71px;font-size:16px;line-height:16px;color:#0b6a8e;transform:scaleX(0.986);">Form NZ 332</span>
<span id="t96" class="t" style="left:807.10px;top:643.71px;font-size:16px;line-height:16px;color:#333;transform:scaleX(0.986);">16/02/2020</span>
<span id="t97" class="t" style="left:995.20px;top:643.71px;font-size:16px;line-height:16px;color:#333;transform:scaleX(0.986);">Request For Information</span>
<span id="t98" class="t" style="left:1212.40px;top:643.71px;font-size:16px;line-height:16px;color:#333;transform:scaleX(0.986);">Responded</span>
<span id="t99" class="t" style="left:1310.60px;top:643.71px;font-size:16px;line-height:16px;color:#333;transform:scaleX(0.986);">Abdul Halim</span>
<span id="t100" class="t" style="left:1499.60px;top:643.71px;font-size:16px;line-height:16px;color:#333;transform:scaleX(0.986);">Majestic</span>
<span id="t101" class="t" style="left:1699.80px;top:643.71px;font-size:16px;line-height:16px;color:#333;transform:scaleX(0.986);">Patrick O'Leary</span>
<div style="position:absolute;left:35px;top:713.5px;width:1843px;height:1px;background:#e2e2e2"></div>
<div style="position:absolute;left:46px;top:684.0px;width:18px;height:18px;box-sizing:border-box;border:2px solid #222;border-radius:2px;background:#fff"></div>
<span id="t102" class="t" style="left:131.10px;top:685.21px;font-size:16px;line-height:16px;color:#333;transform:scaleX(0.986);">MAJ-RFI-000142</span>
<span id="t103" class="t" style="left:332.30px;top:685.21px;font-size:16px;line-height:16px;color:#0b6a8e;transform:scaleX(0.986);">Pipe too lrge for opening</span>
<span id="t104" class="t" style="left:807.10px;top:685.21px;font-size:16px;line-height:16px;color:#333;transform:scaleX(0.986);">14/02/2020</span>
<span id="t105" class="t" style="left:995.20px;top:685.21px;font-size:16px;line-height:16px;color:#333;transform:scaleX(0.986);">Request For Information</span>
<span id="t106" class="t" style="left:1212.40px;top:685.21px;font-size:16px;line-height:16px;color:#333;transform:scaleX(0.986);">Overdue</span>
<span id="t107" class="t" style="left:1310.60px;top:685.21px;font-size:16px;line-height:16px;color:#333;transform:scaleX(0.986);">Patrick O'Leary</span>
<span id="t108" class="t" style="left:1499.60px;top:685.21px;font-size:16px;line-height:16px;color:#333;transform:scaleX(0.986);">Majestic</span>
<span id="t109" class="t" style="left:1699.80px;top:685.21px;font-size:16px;line-height:16px;color:#333;transform:scaleX(0.986);">Patrick O'Leary</span>
<div style="position:absolute;left:35px;top:755.0px;width:1843px;height:1px;background:#e2e2e2"></div>
<div style="position:absolute;left:46px;top:725.5px;width:18px;height:18px;box-sizing:border-box;border:2px solid #222;border-radius:2px;background:#fff"></div>
<span id="t110" class="t" style="left:131.10px;top:726.71px;font-size:16px;line-height:16px;color:#333;transform:scaleX(0.986);">MAJ-RFI-000139</span>
<span id="t111" class="t" style="left:332.30px;top:726.71px;font-size:16px;line-height:16px;color:#0b6a8e;transform:scaleX(0.986);">Fwd: HVAC Condensing Unit Relocation</span>
<span id="t112" class="t" style="left:807.10px;top:726.71px;font-size:16px;line-height:16px;color:#333;transform:scaleX(0.986);">14/05/2019</span>
<span id="t113" class="t" style="left:995.20px;top:726.71px;font-size:16px;line-height:16px;color:#333;transform:scaleX(0.986);">Request For Information</span>
<span id="t114" class="t" style="left:1212.40px;top:726.71px;font-size:16px;line-height:16px;color:#333;transform:scaleX(0.986);">Overdue</span>
<span id="t115" class="t" style="left:1310.60px;top:726.71px;font-size:16px;line-height:16px;color:#333;transform:scaleX(0.986);">Patrick O'Leary</span>
<span id="t116" class="t" style="left:1499.60px;top:726.71px;font-size:16px;line-height:16px;color:#333;transform:scaleX(0.986);">Majestic</span>
<span id="t117" class="t" style="left:1699.80px;top:726.71px;font-size:16px;line-height:16px;color:#333;transform:scaleX(0.986);">Patrick O'Leary</span>
<div style="position:absolute;left:35px;top:796.5px;width:1843px;height:1px;background:#e2e2e2"></div>
<div style="position:absolute;left:46px;top:767.0px;width:18px;height:18px;box-sizing:border-box;border:2px solid #222;border-radius:2px;background:#fff"></div>
<span id="t118" class="t" style="left:131.10px;top:768.21px;font-size:16px;line-height:16px;color:#333;transform:scaleX(0.986);">MAJ-RFI-000138</span>
<span id="t119" class="t" style="left:332.30px;top:768.21px;font-size:16px;line-height:16px;color:#0b6a8e;transform:scaleX(0.986);">Fwd: treatment for exposed concrete on south wall</span>
<span id="t120" class="t" style="left:807.10px;top:768.21px;font-size:16px;line-height:16px;color:#333;transform:scaleX(0.986);">14/05/2019</span>
<span id="t121" class="t" style="left:995.20px;top:768.21px;font-size:16px;line-height:16px;color:#333;transform:scaleX(0.986);">Request For Information</span>
<span id="t122" class="t" style="left:1212.40px;top:768.21px;font-size:16px;line-height:16px;color:#333;transform:scaleX(0.986);">Overdue</span>
<span id="t123" class="t" style="left:1310.60px;top:768.21px;font-size:16px;line-height:16px;color:#333;transform:scaleX(0.986);">Patrick O'Leary</span>
<span id="t124" class="t" style="left:1499.60px;top:768.21px;font-size:16px;line-height:16px;color:#333;transform:scaleX(0.986);">Majestic</span>
<span id="t125" class="t" style="left:1699.80px;top:768.21px;font-size:16px;line-height:16px;color:#333;transform:scaleX(0.986);">Patrick O'Leary</span>
<div style="position:absolute;left:35px;top:838.0px;width:1843px;height:1px;background:#e2e2e2"></div>
<div style="position:absolute;left:46px;top:808.5px;width:18px;height:18px;box-sizing:border-box;border:2px solid #222;border-radius:2px;background:#fff"></div>
<span id="t126" class="t" style="left:131.10px;top:809.71px;font-size:16px;line-height:16px;color:#333;transform:scaleX(0.986);">MAJ-RFI-000137</span>
<span id="t127" class="t" style="left:332.30px;top:809.71px;font-size:16px;line-height:16px;color:#0b6a8e;transform:scaleX(0.986);">Aclaracion sobre cota</span>
<span id="t128" class="t" style="left:807.10px;top:809.71px;font-size:16px;line-height:16px;color:#333;transform:scaleX(0.986);">31/01/2018</span>
<span id="t129" class="t" style="left:995.20px;top:809.71px;font-size:16px;line-height:16px;color:#333;transform:scaleX(0.986);">Request For Information</span>
<span id="t130" class="t" style="left:1212.40px;top:809.71px;font-size:16px;line-height:16px;color:#333;transform:scaleX(0.986);">Overdue</span>
<span id="t131" class="t" style="left:1310.60px;top:809.71px;font-size:16px;line-height:16px;color:#333;transform:scaleX(0.986);">Patrick O'Leary</span>
<span id="t132" class="t" style="left:1499.60px;top:809.71px;font-size:16px;line-height:16px;color:#333;transform:scaleX(0.986);">Majestic</span>
<span id="t133" class="t" style="left:1699.80px;top:809.71px;font-size:16px;line-height:16px;color:#333;transform:scaleX(0.986);">Patrick O'Leary</span>
<div style="position:absolute;left:35px;top:879.5px;width:1843px;height:1px;background:#e2e2e2"></div>
<div style="position:absolute;left:46px;top:850.0px;width:18px;height:18px;box-sizing:border-box;border:2px solid #222;border-radius:2px;background:#fff"></div>
<span id="t134" class="t" style="left:131.10px;top:851.21px;font-size:16px;line-height:16px;color:#333;transform:scaleX(0.986);">AJH-RFI-000005</span>
<span id="t135" class="t" style="left:332.30px;top:851.21px;font-size:16px;line-height:16px;color:#0b6a8e;transform:scaleX(0.986);">treatment for exposed concrete on south wall</span>
<span id="t136" class="t" style="left:807.10px;top:851.21px;font-size:16px;line-height:16px;color:#333;transform:scaleX(0.986);">06/07/2017</span>
<span id="t137" class="t" style="left:995.20px;top:851.21px;font-size:16px;line-height:16px;color:#333;transform:scaleX(0.986);">Request For Information</span>
<span id="t138" class="t" style="left:1212.40px;top:851.21px;font-size:16px;line-height:16px;color:#333;transform:scaleX(0.986);">Overdue</span>
<span id="t139" class="t" style="left:1310.60px;top:851.21px;font-size:16px;line-height:16px;color:#333;transform:scaleX(0.986);">Lewis Miller</span>
<span id="t140" class="t" style="left:1499.60px;top:851.21px;font-size:16px;line-height:16px;color:#333;transform:scaleX(0.986);">AJ Services</span>
<span id="t141" class="t" style="left:1699.80px;top:851.21px;font-size:16px;line-height:16px;color:#333;transform:scaleX(0.986);">Patrick O'Leary</span>
<div style="position:absolute;left:35px;top:921.0px;width:1843px;height:1px;background:#e2e2e2"></div>
<div style="position:absolute;left:46px;top:891.5px;width:18px;height:18px;box-sizing:border-box;border:2px solid #222;border-radius:2px;background:#fff"></div>
<span id="t142" class="t" style="left:131.10px;top:892.71px;font-size:16px;line-height:16px;color:#333;transform:scaleX(0.986);">DRU-RFI-000029</span>
<span id="t143" class="t" style="left:332.30px;top:892.71px;font-size:16px;line-height:16px;color:#0b6a8e;transform:scaleX(0.986);">main security gate - specify gate system</span>
<span id="t144" class="t" style="left:807.10px;top:892.71px;font-size:16px;line-height:16px;color:#333;transform:scaleX(0.986);">02/07/2017</span>
<span id="t145" class="t" style="left:995.20px;top:892.71px;font-size:16px;line-height:16px;color:#333;transform:scaleX(0.986);">Request For Information</span>
<span id="t146" class="t" style="left:1212.40px;top:892.71px;font-size:16px;line-height:16px;color:#333;transform:scaleX(0.986);">Overdue</span>
<span id="t147" class="t" style="left:1310.60px;top:892.71px;font-size:16px;line-height:16px;color:#333;transform:scaleX(0.986);">Trevor Jones</span>
<span id="t148" class="t" style="left:1499.60px;top:892.71px;font-size:16px;line-height:16px;color:#333;transform:scaleX(0.986);">Drummond</span>
<span id="t149" class="t" style="left:1699.80px;top:892.71px;font-size:16px;line-height:16px;color:#333;transform:scaleX(0.986);">Patrick O'Leary</span>
<div style="position:absolute;left:35px;top:962.5px;width:1843px;height:1px;background:#e2e2e2"></div>
<div style="position:absolute;left:46px;top:933.0px;width:18px;height:18px;box-sizing:border-box;border:2px solid #222;border-radius:2px;background:#fff"></div>
<span id="t150" class="t" style="left:131.10px;top:934.21px;font-size:16px;line-height:16px;color:#333;transform:scaleX(0.986);">DRU-RFI-000027</span>
<span id="t151" class="t" style="left:332.30px;top:934.21px;font-size:16px;line-height:16px;color:#0b6a8e;transform:scaleX(0.986);">permanent security gate - specify gate system</span>
<span id="t152" class="t" style="left:807.10px;top:934.21px;font-size:16px;line-height:16px;color:#333;transform:scaleX(0.986);">29/06/2017</span>
<span id="t153" class="t" style="left:995.20px;top:934.21px;font-size:16px;line-height:16px;color:#333;transform:scaleX(0.986);">Request For Information</span>
<span id="t154" class="t" style="left:1212.40px;top:934.21px;font-size:16px;line-height:16px;color:#333;transform:scaleX(0.986);">Responded</span>
<span id="t155" class="t" style="left:1310.60px;top:934.21px;font-size:16px;line-height:16px;color:#333;transform:scaleX(0.986);">Trevor Jones</span>
<span id="t156" class="t" style="left:1499.60px;top:934.21px;font-size:16px;line-height:16px;color:#333;transform:scaleX(0.986);">Drummond</span>
<span id="t157" class="t" style="left:1699.80px;top:934.21px;font-size:16px;line-height:16px;color:#333;transform:scaleX(0.986);">Patrick O'Leary</span>
<div style="position:absolute;left:35px;top:1004.0px;width:1843px;height:1px;background:#e2e2e2"></div>
<div style="position:absolute;left:46px;top:974.5px;width:18px;height:18px;box-sizing:border-box;border:2px solid #222;border-radius:2px;background:#fff"></div>
<span id="t158" class="t" style="left:131.10px;top:975.71px;font-size:16px;line-height:16px;color:#333;transform:scaleX(0.986);">DRU-RFI-000026</span>
<span id="t159" class="t" style="left:332.30px;top:975.71px;font-size:16px;line-height:16px;color:#0b6a8e;transform:scaleX(0.986);">Fiber Optic Route Issue</span>
<span id="t160" class="t" style="left:807.10px;top:975.71px;font-size:16px;line-height:16px;color:#333;transform:scaleX(0.986);">29/06/2017</span>
<span id="t161" class="t" style="left:995.20px;top:975.71px;font-size:16px;line-height:16px;color:#333;transform:scaleX(0.986);">Request For Information</span>
<span id="t162" class="t" style="left:1212.40px;top:975.71px;font-size:16px;line-height:16px;color:#333;transform:scaleX(0.986);">Responded</span>
<span id="t163" class="t" style="left:1310.60px;top:975.71px;font-size:16px;line-height:16px;color:#333;transform:scaleX(0.986);">Trevor Jones</span>
<span id="t164" class="t" style="left:1499.60px;top:975.71px;font-size:16px;line-height:16px;color:#333;transform:scaleX(0.986);">Drummond</span>
<span id="t165" class="t" style="left:1699.80px;top:975.71px;font-size:16px;line-height:16px;color:#333;transform:scaleX(0.986);">Patrick O'Leary</span>
<div style="position:absolute;left:35px;top:1045.5px;width:1843px;height:1px;background:#e2e2e2"></div>
<div style="position:absolute;left:46px;top:1016.0px;width:18px;height:18px;box-sizing:border-box;border:2px solid #222;border-radius:2px;background:#fff"></div>
<span id="t166" class="t" style="left:131.10px;top:1017.21px;font-size:16px;line-height:16px;color:#333;transform:scaleX(0.986);">DRU-RFI-000025</span>
<span id="t167" class="t" style="left:332.30px;top:1017.21px;font-size:16px;line-height:16px;color:#0b6a8e;transform:scaleX(0.986);">Electric gate openers - specify which gates need them</span>
<span id="t168" class="t" style="left:807.10px;top:1017.21px;font-size:16px;line-height:16px;color:#333;transform:scaleX(0.986);">29/06/2017</span>
<span id="t169" class="t" style="left:995.20px;top:1017.21px;font-size:16px;line-height:16px;color:#333;transform:scaleX(0.986);">Request For Information</span>
<span id="t170" class="t" style="left:1212.40px;top:1017.21px;font-size:16px;line-height:16px;color:#333;transform:scaleX(0.986);">Responded</span>
<span id="t171" class="t" style="left:1310.60px;top:1017.21px;font-size:16px;line-height:16px;color:#333;transform:scaleX(0.986);">Trevor Jones</span>
<span id="t172" class="t" style="left:1499.60px;top:1017.21px;font-size:16px;line-height:16px;color:#333;transform:scaleX(0.986);">Drummond</span>
<span id="t173" class="t" style="left:1699.80px;top:1017.21px;font-size:16px;line-height:16px;color:#333;transform:scaleX(0.986);">Patrick O'Leary</span>
<div style="position:absolute;left:35px;top:1087.0px;width:1843px;height:1px;background:#e2e2e2"></div>
<div style="position:absolute;left:46px;top:1057.5px;width:18px;height:18px;box-sizing:border-box;border:2px solid #222;border-radius:2px;background:#fff"></div>
<span id="t174" class="t" style="left:131.10px;top:1058.71px;font-size:16px;line-height:16px;color:#333;transform:scaleX(0.986);">SPL-RFI-000012</span>
<span id="t175" class="t" style="left:332.30px;top:1058.71px;font-size:16px;line-height:16px;color:#0b6a8e;transform:scaleX(0.986);">Final drainage work</span>
<span id="t176" class="t" style="left:807.10px;top:1058.71px;font-size:16px;line-height:16px;color:#333;transform:scaleX(0.986);">21/03/2017</span>
<span id="t177" class="t" style="left:995.20px;top:1058.71px;font-size:16px;line-height:16px;color:#333;transform:scaleX(0.986);">Request For Information</span>
<span id="t178" class="t" style="left:1212.40px;top:1058.71px;font-size:16px;line-height:16px;color:#333;transform:scaleX(0.986);">Closed-Out</span>
<span id="t179" class="t" style="left:1310.60px;top:1058.71px;font-size:16px;line-height:16px;color:#333;transform:scaleX(0.986);">Antony Taylor</span>
<span id="t180" class="t" style="left:1499.60px;top:1058.71px;font-size:16px;line-height:16px;color:#333;transform:scaleX(0.986);">Splice</span>
<span id="t181" class="t" style="left:1699.80px;top:1058.71px;font-size:16px;line-height:16px;color:#333;transform:scaleX(0.986);">Patrick O'Leary</span>
</body></html>
